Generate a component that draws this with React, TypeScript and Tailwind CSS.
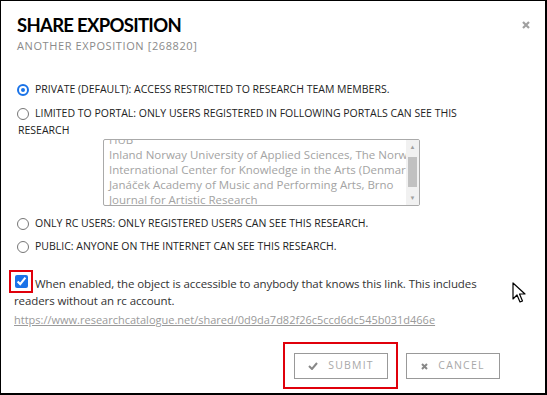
import React from 'react';

const portals = [
  'HUB',
  'Inland Norway University of Applied Sciences, The Norwegian Film School',
  'International Center for Knowledge in the Arts (Denmark)',
  'Janáček Academy of Music and Performing Arts, Brno',
  'Journal for Artistic Research',
];

const Radio = ({ checked }: { checked: boolean }) => (
  <span
    className={`inline-block shrink-0 w-[12px] h-[12px] rounded-full ${
      checked ? 'bg-[#1a73e8] border-[2px] border-[#1a73e8]' : 'border border-[#767676] bg-white'
    }`}
  >
    {checked && <span className="block w-full h-full rounded-full border-2 border-white bg-[#1a73e8]" />}
  </span>
);

const Option = ({ checked, children }: { checked?: boolean; children: React.ReactNode }) => (
  <label className="flex items-center gap-[6px] h-[17px] whitespace-nowrap">
    <Radio checked={!!checked} />
    <span>{children}</span>
  </label>
);

const App: React.FC = () => {
  return (
    <div
      className="relative w-[547px] h-[395px] bg-white border-l border-t border-r-2 border-b-2 border-black overflow-hidden"
      style={{ fontFamily: '"Open Sans", "Noto Sans", sans-serif' }}
    >
      <div className="flex justify-between pl-[16px] pr-[15px] pt-[10px]">
        <div>
          <h1 className="text-[18.5px] font-bold leading-[28px] text-black tracking-[-0.7px]" style={{ fontFamily: 'Lato, sans-serif' }}>
            SHARE EXPOSITION
          </h1>
          <p className="text-[11px] leading-[14px] text-[#8a8a8a] tracking-[0.6px] uppercase">Another exposition [268820]</p>
        </div>
        <svg className="mt-[10px]" width="8" height="8" viewBox="0 0 8 8">
          <path d="M1 1 L7 7 M7 1 L1 7" stroke="#a0a0a0" strokeWidth="2.2" />
        </svg>
      </div>

      <div className="pl-[16px] pr-[20px] pt-[28px] flex flex-col text-[10.5px] text-[#222] uppercase">
        <Option checked>Private (default): access restricted to research team members.</Option>
        <div className="mt-[7px]">
          <Option>Limited to portal: only users registered in following portals can see this</Option>
        </div>
        <div className="h-[17px] leading-[17px] pl-[1px]">Research</div>
        <div className="ml-[86px] w-[317px] h-[67px] border border-[#aaa] rounded-[2px] flex overflow-hidden normal-case">
          <div className="flex-1 overflow-hidden pl-[5px] text-[11.5px] leading-[15px] text-[#a3a3a3] whitespace-nowrap">
            <div className="h-[7px] overflow-hidden flex flex-col justify-end">{portals[0]}</div>
            {portals.slice(1).map((p) => (
              <div key={p}>{p}</div>
            ))}
          </div>
          <div className="w-[13px] bg-[#f1f1f1] flex flex-col items-center">
            <span className="text-[6px] text-[#a0a0a0] leading-[10px] pt-[2px]">▲</span>
            <span className="w-[9px] h-[30px] bg-[#c1c1c1] mt-[5px]" />
            <span className="flex-1" />
            <span className="text-[6px] text-[#a0a0a0] leading-[10px] pb-[2px]">▼</span>
          </div>
        </div>
        <div className="mt-[9px]">
          <Option>Only RC users: only registered users can see this research.</Option>
        </div>
        <div className="mt-[6px]">
          <Option>Public: anyone on the internet can see this research.</Option>
        </div>
      </div>

      <div className="pl-[13px] pr-[40px] mt-[20px] text-[11.5px] tracking-[-0.1px] text-[#333] leading-[17px]">
        <p>
          <span className="relative inline-block w-[13px] h-[13px] align-[0px] mr-[7px] ml-[1px]">
            <input type="checkbox" defaultChecked className="block w-[13px] h-[13px] m-0 accent-[#1a73e8]" />
            <span className="absolute -left-[6px] -top-[5px] w-[24px] h-[23px] border-2 border-[#e0000b]" />
          </span>
          When enabled, the object is accessible to anybody that knows this link. This includes readers without an rc account.
        </p>
        <a className="block mt-[2px] text-[11px] tracking-normal text-[#9a9a9a] underline" href="#">
          https://www.researchcatalogue.net/shared/0d9da7d82f26c5ccd6dc545b031d466e
        </a>
      </div>

      <div className="flex justify-end gap-[18px] pr-[45px] mt-[25px] text-[10.5px] tracking-[1.2px] text-[#a8a8a8]">
        <div className="relative">
          <button className="w-[94px] h-[26px] border border-[#999] flex items-center justify-center gap-[10px] bg-white">
            <svg width="10" height="8" viewBox="0 0 10 8">
              <path d="M1 4 L4 7 L9 1" stroke="#888" strokeWidth="2" fill="none" />
            </svg>
            SUBMIT
          </button>
          <span className="absolute -left-[11px] -top-[11px] w-[115px] h-[47px] border-2 border-[#e0000b]" />
        </div>
        <button className="w-[94px] h-[26px] border border-[#999] flex items-center justify-center gap-[10px] bg-white">
          <svg width="7" height="7" viewBox="0 0 7 7">
            <path d="M1 1 L6 6 M6 1 L1 6" stroke="#888" strokeWidth="2" />
          </svg>
          CANCEL
        </button>
      </div>

      <svg className="absolute left-[511px] top-[281px]" width="14" height="22" viewBox="0 0 14 22">
        <path d="M1 1 L1 17 L5 13 L8 20 L10.5 19 L7.5 12 L13 12 Z" fill="white" stroke="black" strokeWidth="1.2" strokeLinejoin="round" />
      </svg>
    </div>
  );
};

export default App;
